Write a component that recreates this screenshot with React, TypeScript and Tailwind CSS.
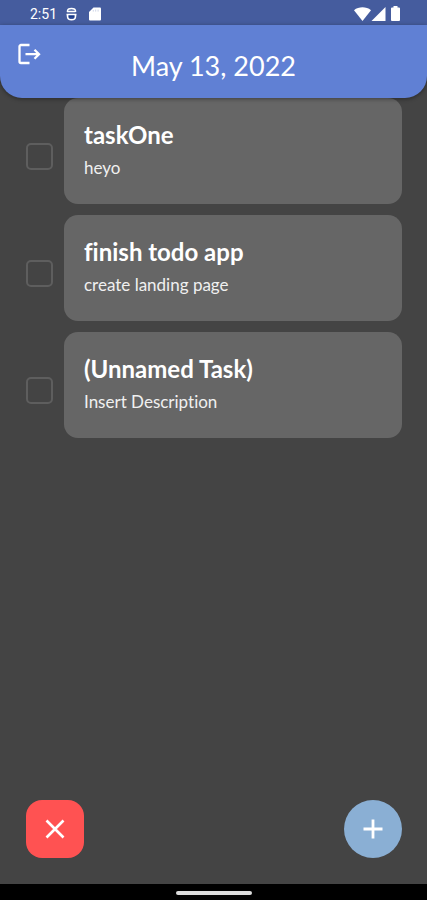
import { useState } from 'react'

type Task = {
  id: number
  title: string
  description: string
  done: boolean
}

const initialTasks: Task[] = [
  { id: 1, title: 'taskOne', description: 'heyo', done: false },
  { id: 2, title: 'finish todo app', description: 'create landing page', done: false },
  { id: 3, title: '(Unnamed Task)', description: 'Insert Description', done: false },
]

function StatusBar() {
  return (
    <div className="flex h-[25px] items-center justify-between bg-[#455c9e] pl-[30px] pr-[27px] pt-[2px] text-white">
      <div className="flex items-center">
        <span className="w-[36px] font-[Roboto,sans-serif] text-[14px] leading-4">2:51</span>
        <svg width="11" height="14" viewBox="0 0 11 14" fill="none" aria-hidden="true">
          <path d="M1.500 5V4C1.500 2.300 3 1.400 5.500 1.400S9.500 2.300 9.500 4V5" stroke="currentColor" strokeWidth="1.500" />
          <path d="M1 4.600h8.500M.5 7.600h10" stroke="currentColor" strokeWidth="1.500" />
          <path d="M3 9.600h5" stroke="#173a8c" strokeWidth="2" />
          <path d="M1.500 8v1.500c0 2 1.500 3.300 4 3.300s4-1.300 4-3.300V8" stroke="currentColor" strokeWidth="1.500" />
        </svg>
        <svg className="ml-3" width="12" height="14" viewBox="0 0 12 14" fill="currentColor" aria-hidden="true">
          <path d="M4.500.5H11a1 1 0 0 1 1 1v11a1 1 0 0 1-1 1H1a1 1 0 0 1-1-1V5z" />
          <path d="M4.300 3v1.600M6.700 2.600v2M9.100 2.600v2" stroke="#c3cbe2" strokeWidth=".8" />
        </svg>
      </div>
      <div className="flex items-center">
        <svg width="17" height="14" viewBox="0 0 17 14" fill="currentColor" aria-hidden="true">
          <path d="M0 3.200C4.800-.6 12.200-.6 17 3.200L8.500 14z" />
        </svg>
        <svg width="15" height="14" viewBox="0 0 15 14" fill="currentColor" aria-hidden="true">
          <path d="M14.500 0v14H.5z" />
        </svg>
        <svg className="ml-[5px]" width="9" height="15" viewBox="0 0 9 15" fill="currentColor" aria-hidden="true">
          <path d="M2.500 0h4v1.500H8a1 1 0 0 1 1 1V14a1 1 0 0 1-1 1H1a1 1 0 0 1-1-1V2.500a1 1 0 0 1 1-1h1.500z" />
        </svg>
      </div>
    </div>
  )
}

function TaskRow({ task, onToggle }: { task: Task; onToggle: () => void }) {
  const inputId = `task-${task.id}`

  return (
    <li className="flex items-start">
      <input
        id={inputId}
        type="checkbox"
        checked={task.done}
        onChange={onToggle}
        className="mr-[11px] mt-[45px] size-[27px] shrink-0 appearance-none rounded-[5px] border-2 border-[#5e5e5e] checked:bg-[#636363]"
      />
      <label htmlFor={inputId} className="flex min-h-[106px] flex-1 flex-col rounded-[14px] bg-[#666666] px-5 pt-[22px]">
        <span className="text-[24px] font-bold leading-[30px] text-white">{task.title}</span>
        <span className="mt-[6px] text-[17px] leading-6 text-[#f0f0f0]">{task.description}</span>
      </label>
    </li>
  )
}

export default function App() {
  const [tasks, setTasks] = useState(initialTasks)

  const toggleTask = (id: number) => {
    setTasks((prev) => prev.map((t) => (t.id === id ? { ...t, done: !t.done } : t)))
  }

  const clearDone = () => {
    setTasks((prev) => prev.filter((t) => !t.done))
  }

  const addTask = () => {
    setTasks((prev) => [
      ...prev,
      { id: Date.now(), title: '(Unnamed Task)', description: 'Insert Description', done: false },
    ])
  }

  return (
    <div className="flex min-h-screen flex-col bg-[#444444] font-[Lato,sans-serif] [font-variant-ligatures:none]">
      <StatusBar />

      <header className="relative z-10 grid h-[73px] grid-cols-[40px_1fr_40px] rounded-b-[22px] bg-[#6080d4] px-[18px] shadow-[0_1px_4px_rgba(0,0,0,0.4)]">
        <button type="button" aria-label="Log out" className="mt-[18px] size-[23px] text-white">
          <svg width="23" height="23" viewBox="0 0 23 23" fill="none" stroke="currentColor" strokeWidth="2.300" aria-hidden="true">
            <path d="M11.500 2H3a1.500 1.500 0 0 0-1.500 1.500v15A1.500 1.500 0 0 0 3 20h8.500" />
            <path d="M7.500 11.200H21M16.500 6.700l4.500 4.500-4.500 4.500" />
          </svg>
        </button>
        <h1 className="mt-[25px] text-center text-[27px] leading-8 text-white">May 13, 2022</h1>
      </header>

      <main className="flex-1">
        <ul className="flex flex-col gap-[11px] pl-[26px] pr-[25px]">
          {tasks.map((task) => (
            <TaskRow key={task.id} task={task} onToggle={() => toggleTask(task.id)} />
          ))}
        </ul>
      </main>

      <div className="flex justify-between pb-[26px] pl-[26px] pr-[25px]">
        <button
          type="button"
          aria-label="Clear completed tasks"
          onClick={clearDone}
          className="flex size-[58px] items-center justify-center rounded-[16px] bg-[#ff5252] text-white"
        >
          <svg width="20" height="20" viewBox="0 0 20 20" stroke="currentColor" strokeWidth="2.600" aria-hidden="true">
            <path d="M1.500 1.500l17 17M18.500 1.500l-17 17" />
          </svg>
        </button>
        <button
          type="button"
          aria-label="Add task"
          onClick={addTask}
          className="flex size-[58px] items-center justify-center rounded-full bg-[#8aafd4] text-white"
        >
          <svg width="20" height="20" viewBox="0 0 20 20" stroke="currentColor" strokeWidth="2.800" aria-hidden="true">
            <path d="M10 .5v19M.5 10h19" />
          </svg>
        </button>
      </div>

      {/* Gesture bar */}
      <div className="flex h-4 items-center justify-center bg-black">
        <div className="mt-[2px] h-1 w-[76px] rounded-full bg-[#dcdcdc]" />
      </div>
    </div>
  )
}
